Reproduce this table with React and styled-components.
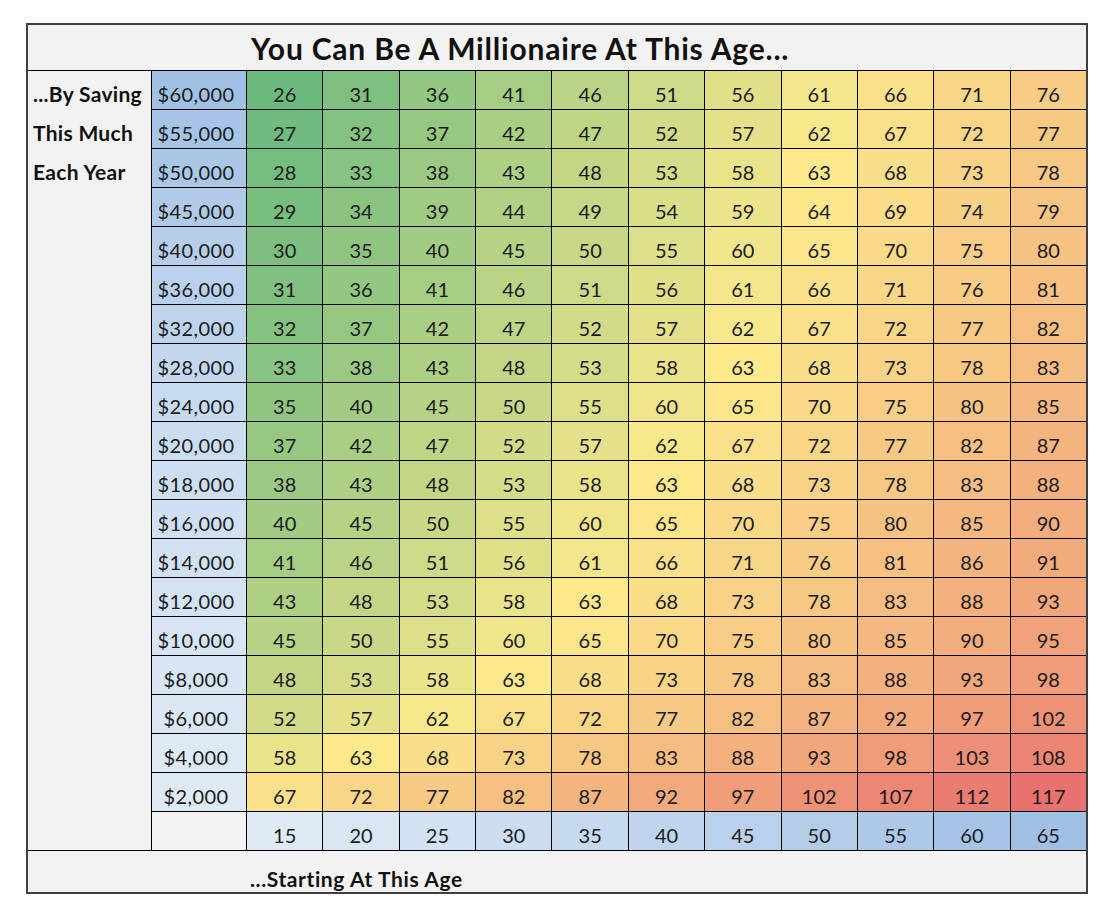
import React from "react";
import styled, { createGlobalStyle } from "styled-components";

const Global = createGlobalStyle`
  html, body { margin: 0; padding: 0; background: #ffffff; }
  body { font-family: Lato, "Open Sans", sans-serif; color: #1b1b1b; }
`;

const Page = styled.div`
  padding: 23px 0 0 26px;
`;

const Frame = styled.div`
  width: 1058px;
  border: 2px solid #3f3f3f;
  background: #000;
  display: flex;
  flex-direction: column;
  gap: 1px;
`;

const Title = styled.div`
  height: 45px;
  background: #f2f2f2;
  display: flex;
  align-items: center;
  padding-left: 223px;
  font-size: 30px;
  font-weight: 700;
  letter-spacing: 0.8px;
  color: #111;
`;

const Grid = styled.div`
  display: grid;
  grid-template-columns: 123px 94px repeat(11, 1fr);
  grid-template-rows: repeat(20, 38px);
  gap: 1px;
`;

const LabelPanel = styled.div`
  grid-column: 1;
  grid-row: 1 / span 20;
  background: #f2f2f2;
  display: grid;
  grid-template-rows: repeat(3, 38px);
  row-gap: 1px;
  align-content: start;
`;

const Label = styled.div`
  display: flex;
  align-items: flex-end;
  padding: 0 0 5px 5px;
  line-height: 20px;
  font-size: 21px;
  font-weight: 700;
  letter-spacing: 0.3px;
  color: #111;
  white-space: nowrap;
`;

const Cell = styled.div`
  display: flex;
  align-items: flex-end;
  justify-content: center;
  padding-bottom: 5px;
  padding-right: ${(p) => (p.$shift ? "6px" : "0")};
  line-height: 20px;
  font-size: 20px;
  letter-spacing: ${(p) => (p.$shift ? "0.4px" : "0")};
  color: #1b1b1b;
  background: ${(p) => p.$bg};
`;

const Footer = styled.div`
  height: 41px;
  background: #f2f2f2;
  display: flex;
  align-items: flex-end;
  padding: 0 0 3px 222px;
  box-sizing: border-box;
  font-size: 21px;
  line-height: 20px;
  font-weight: 700;
  letter-spacing: 0.6px;
  color: #111;
`;

const rows = [
  [60000, 26], [55000, 27], [50000, 28], [45000, 29], [40000, 30],
  [36000, 31], [32000, 32], [28000, 33], [24000, 35], [20000, 37],
  [18000, 38], [16000, 40], [14000, 41], [12000, 43], [10000, 45],
  [8000, 48], [6000, 52], [4000, 58], [2000, 67],
];
const ages = [15, 20, 25, 30, 35, 40, 45, 50, 55, 60, 65];

const mix = (a, b, t) => a.map((c, i) => Math.round(c + (b[i] - c) * t));
const rgb = (c) => `rgb(${c[0]},${c[1]},${c[2]})`;

const GREEN = [108, 186, 126];
const YELLOW = [252, 233, 140];
const RED = [233, 113, 111];
const heat = (v) => {
  const min = 26, mid = 63, max = 117;
  if (v <= mid) return rgb(mix(GREEN, YELLOW, (v - min) / (mid - min)));
  return rgb(mix(YELLOW, RED, (v - mid) / (max - mid)));
};

const BLUE_LIGHT = [223, 234, 246];
const BLUE_DARK = [160, 192, 228];
const blue = (t) => rgb(mix(BLUE_LIGHT, BLUE_DARK, t));

const fmt = (n) => "$" + n.toLocaleString("en-US");

export default function App() {
  return (
    <>
      <Global />
      <Page>
        <Frame>
          <Title>You Can Be A Millionaire At This Age...</Title>
          <Grid>
            <LabelPanel>
              <Label>...By Saving</Label>
              <Label>This Much</Label>
              <Label>Each Year</Label>
            </LabelPanel>
            {rows.map(([amt, start]) => (
              <React.Fragment key={amt}>
                <Cell $shift $bg={blue((amt - 2000) / 58000)}>{fmt(amt)}</Cell>
                {ages.map((_, k) => {
                  const v = start + 5 * k;
                  return (
                    <Cell key={k} $bg={heat(v)}>
                      {v}
                    </Cell>
                  );
                })}
              </React.Fragment>
            ))}
            <Cell $bg="#f2f2f2" />
            {ages.map((a) => (
              <Cell key={a} $bg={blue((a - 15) / 50)}>
                {a}
              </Cell>
            ))}
          </Grid>
          <Footer>...Starting At This Age</Footer>
        </Frame>
      </Page>
    </>
  );
}
